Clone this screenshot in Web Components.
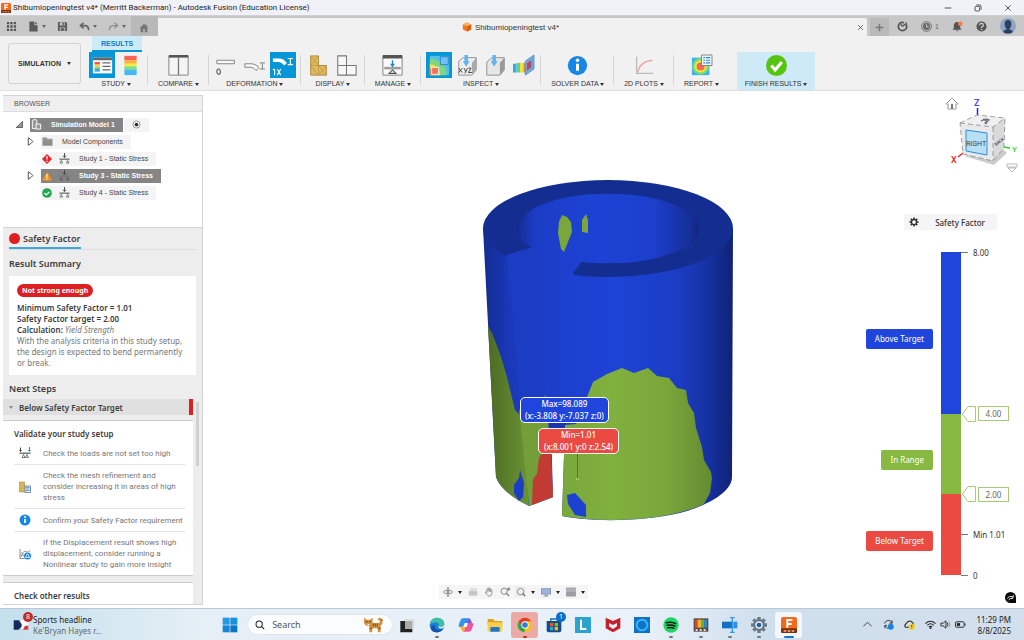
<!DOCTYPE html>
<html lang="en">
<head>
<meta charset="utf-8">
<meta name="viewport" content="width=device-width, initial-scale=1">
<title>Shibumiopeningtest v4* - Autodesk Fusion</title>
<style>
  body {
    margin: 0;
    font-family: "Noto Sans", "Open Sans", sans-serif;
    font-size: 8px;
    line-height: 11px;
    color: #3c3c3c;
    background: #fff;
    --panel-width: 199px;
    --ui-font: "Liberation Sans", Arial, sans-serif;
    --narrow-font: Roboto, "Noto Sans", sans-serif;
    --accent: #0696d7;
    --above: #1f45dc;
    --range: #87b840;
    --below: #eb4a42;
  }
</style>
</head>
<body>
<fusion-app></fusion-app>

<script>
const ICONS = {
  fusion: `<rect width="24" height="24" rx="3" fill="#f26a1b"/><rect y="17" width="24" height="7" rx="2" fill="#7c2f0c"/><path d="M8 3h9v3h-6v3h5v3h-5v4H8z" fill="#fff"/><path d="M4 21h16" stroke="#f7b58a" stroke-width="2" stroke-dasharray="4 2"/>`,
  grid: `<path d="M2 2h5v5H2zM9.500 2h5v5h-5zM17 2h5v5h-5zM2 9.500h5v5H2zM9.500 9.500h5v5h-5zM17 9.500h5v5h-5zM2 17h5v5H2zM9.500 17h5v5h-5zM17 17h5v5h-5z" fill="#555"/>`,
  file: `<path d="M3 1h11v8h7v14H3z" fill="#5a5a5a"/><path d="M16 1l5 6h-5z" fill="#5a5a5a"/>`,
  save: `<path d="M2 2h17l3 3v17H2z" fill="#5a5a5a"/><path d="M6 3h11v7H6zM6 14h12v7H6z" fill="#c8c8c8"/><path d="M12 4h3v5h-3zM8 16h8v5H8z" fill="#5a5a5a"/>`,
  undo: `<path d="M10 4L3 10l7 6M4 10h9c5 0 8 3 8 10" fill="none" stroke="#666" stroke-width="3.500"/>`,
  redo: `<path d="M14 4l7 6-7 6M20 10h-9c-5 0-8 3-8 10" fill="none" stroke="#8e8e8e" stroke-width="3"/>`,
  home: `<path d="M12 2L1 13h3v9h6v-7h4v7h6v-9h3L19 9V4h-3v2z" fill="#757575"/>`,
  cube: `<path d="M12 1l10 5v12l-10 5L2 18V6z" fill="#f47a20"/><path d="M12 1l10 5-10 5L2 6z" fill="#ffb066"/><path d="M12 11l10-5v12l-10 5z" fill="#e25d0c"/>`,
  close: `<path d="M4 4l16 16M20 4L4 20" stroke="#555" stroke-width="3" fill="none"/>`,
  minimize: `<path d="M2 12h20" stroke="#333" stroke-width="2.500"/>`,
  restore: `<rect x="3" y="7" width="14" height="14" rx="3" fill="none" stroke="#333" stroke-width="2.500"/><path d="M7 3h10q4 0 4 4v10" fill="none" stroke="#333" stroke-width="2.500"/>`,
  plus: `<path d="M12 2v20M2 12h20" stroke="#777" stroke-width="4"/>`,
  jobs: `<circle cx="12" cy="12" r="9" fill="none" stroke="#555" stroke-width="4"/><path d="M12 12l9-9M8 7l3 4" stroke="#555" stroke-width="3"/><path d="M14 1l6 2-4 4z" fill="#c8c8c8"/>`,
  clock: `<circle cx="12" cy="12" r="10.500" fill="none" stroke="#666" stroke-width="2"/><circle cx="12" cy="12" r="7.500" fill="#666"/><path d="M12 7v6h5" stroke="#ddd" stroke-width="2" fill="none"/>`,
  bell: `<path d="M11 2c-5 0-7 4-7 8v5l-3 4h20l-3-4v-5c0-4-2-8-7-8zM8 20h6l-3 3z" fill="#555"/><circle cx="18" cy="6" r="5" fill="#ff7a45"/>`,
  help: `<circle cx="12" cy="12" r="11" fill="#555"/><path d="M8 9q0-4 4-4t4 4q0 2-2.500 3.500Q12 13.500 12 15" stroke="#d0d0d0" stroke-width="2.800" fill="none"/><circle cx="12" cy="18.500" r="1.800" fill="#d0d0d0"/>`,
  avatar: `<circle cx="12" cy="12" r="12" fill="#8ea6c6"/><path d="M12 3c-4 0-5 3-5 6s1 6 3 7v1c-3 1-5 2-5 4 3 3 11 3 14 0 0-2-2-3-5-4v-1c2-1 3-4 3-7s-1-6-5-6z" fill="#2c3f5e"/>`,
  study: `<rect x="1" y="3" width="22" height="18" fill="#fff"/><path d="M1 3h22v3H1z" fill="#666"/><path d="M3 8h6v3H3z" fill="#f2554a"/><path d="M3 11h6v3H3z" fill="#f5d33d"/><path d="M3 14h6v2H3z" fill="#6bd07a"/><path d="M3 16h6v3H3z" fill="#37a6f0"/><path d="M12 9h9M12 13h9M12 17h9" stroke="#666" stroke-width="1.200"/>`,
  spectrum: `<path d="M5 1h14v5H5z" fill="#fb6155"/><path d="M5 6h14v4H5z" fill="#fdb13c"/><path d="M5 10h14v3H5z" fill="#f1ec3f"/><path d="M5 13h14v4H5z" fill="#7bdc8c"/><path d="M5 17h14v6H5z" fill="#3fbcf5"/>`,
  compare: `<path d="M1 1h22v22H1z" fill="#f5f5f5" stroke="#777"/><path d="M1 0h22v3H1z" fill="#555"/><path d="M12 3v20" stroke="#777" stroke-width="1.500"/>`,
  deform0: `<path d="M1 6h20v4H1z" fill="#f8f8f8" stroke="#777"/><ellipse cx="3" cy="19" rx="2" ry="3" fill="none" stroke="#555" stroke-width="1.200"/>`,
  deformA: `<path d="M1 10h8q4 0 8 4l-3 4q-3-4-6-4H1z" fill="#f8f8f8" stroke="#777"/><path d="M18 9h6M18 16h6M21 9v7" stroke="#777" fill="none"/>`,
  deform1: `<path d="M1 4h7q5 0 9 5l-3 3q-3-4-6-4H1z" fill="#fff"/><path d="M18 4h6M18 11h6M21 4v7M3 16v7M1 17l2-1" stroke="#fff" stroke-width="1.300" fill="none"/><path d="M6 16l4 7M10 16l-4 7" stroke="#fff" stroke-width="1.300"/>`,
  mesh: `<path d="M3 1h9v11h9v11H3z" fill="#e0b95b" stroke="#a9843a"/><path d="M3 12h9v11M3 1l9 11 9 11M12 1L3 12l9 11M21 12l-9 11" fill="none" stroke="#b8934a" stroke-width=".8"/>`,
  blocks: `<path d="M2 1h10v11h11v11H2zM2 12h10v11" fill="#f8f8f8" stroke="#777" stroke-width="1.200"/>`,
  manage: `<path d="M1 1h22v22H1z" fill="#fafafa" stroke="#777"/><path d="M1 0h22v4H1z" fill="#555"/><path d="M12 6v6M10 10l2 3 2-3" stroke="#1e88d8" stroke-width="1.500" fill="none"/><path d="M3 14h18v2H3z" fill="#aaa" stroke="#777" stroke-width=".6"/><path d="M12 17l4 4H8z" fill="none" stroke="#555" stroke-width="1.200"/>`,
  probe: `<path d="M1 1h22v22H1z" fill="#53c0e8"/><path d="M1 4q18 2 19 19H1z" fill="#7ed67e"/><path d="M1 10q11 2 12 13H1z" fill="#e9e13e"/><path d="M1 15q6 1 7 8H1z" fill="#f5803a"/><path d="M13 2h9v9h-9z" fill="#6fc0f3" stroke="#2e7cc0"/><path d="M3 14h8v8H3z" fill="#f2715f" stroke="#fff"/>`,
  xyz: `<path d="M2 7l5-4h15v14l-5 6H2z" fill="#eee" stroke="#888"/><path d="M17 9l5-6v14l-5 6z" fill="#aaa"/><path d="M8.500 0h4v7h2l-4 6-4-6h2z" fill="#5fb4ef"/><path d="M2 15l4 5M6 15l-4 5M8 15l2 4M12 15l-3 6M13 15h3l-3 5h4" stroke="#333" fill="none"/>`,
  point: `<path d="M2 8l6-5h14v14l-5 6H2z" fill="#e6e6e6" stroke="#888"/><path d="M17 9l5-6v14l-5 6z" fill="#999"/><path d="M8.500 0h4v7h2l-4 6-4-6h2z" fill="#5fb4ef"/>`,
  plane: `<path d="M0 10h4v10H0z" fill="#36a7f0"/><path d="M4 9h4v11H4z" fill="#62d38c"/><path d="M8 9h4v11H8z" fill="#f0e33f"/><path d="M12 9h3v11h-3z" fill="#f4813b"/><path d="M14 7l10-7v16l-10 7z" fill="#7aa9d8" stroke="#3a9ae0"/><path d="M16 9l5-3v8l-5 4z" fill="#b24c6e"/>`,
  info: `<circle cx="12" cy="12" r="11" fill="#1787e6"/><path d="M12 10v8" stroke="#fff" stroke-width="3.500"/><circle cx="12" cy="6" r="2" fill="#fff"/>`,
  plot: `<path d="M3 2v19h19" fill="none" stroke="#bbb" stroke-width="1.500"/><path d="M4 20Q7 7 21 6" fill="none" stroke="#eba9a2" stroke-width="1.500"/>`,
  report: `<path d="M1 3h20v20H1z" fill="#37b4ee"/><circle cx="11" cy="13" r="9.500" fill="#7ad979"/><circle cx="11" cy="13" r="7" fill="#f3e23c"/><circle cx="11" cy="13" r="4.500" fill="#ef6b52"/><path d="M12 0h12v12H12z" fill="#f4f9ff" stroke="#777"/><path d="M14 3h2M17 3h5M14 6h2M17 6h5M14 9h2M17 9h5" stroke="#2e86d8" stroke-width="1.300"/>`,
  finish: `<circle cx="12" cy="12" r="12" fill="#56c512"/><path d="M6 12l4.500 5L18 8" fill="none" stroke="#fff" stroke-width="3.500"/>`,
  expanded: `<path d="M20 4v16H3z" fill="#999" stroke="#444" stroke-width="2"/>`,
  collapsed: `<path d="M6 2q10 6 12 10Q16 16 6 22z" fill="#fff" stroke="#444" stroke-width="2.500"/>`,
  bodies: `<path d="M3 5q0-4 5-4t5 4v16H3z" fill="#999" stroke="#fff" stroke-width="2"/><path d="M11 11h10v11H11z" fill="#999" stroke="#fff" stroke-width="2"/>`,
  radio: `<circle cx="12" cy="12" r="9.500" fill="#fff" stroke="#777" stroke-width="2"/><circle cx="12" cy="12" r="5" fill="#333"/>`,
  folder: `<path d="M1 3h9l2 3h11v15H1z" fill="#8e8e8e"/><path d="M2 8h20" stroke="#bbb"/>`,
  error: `<path d="M12 0l12 12-12 12L0 12z" fill="#e8222d"/><path d="M12 5v8M12 16v3" stroke="#fff" stroke-width="3"/>`,
  warning: `<path d="M12 1l12 22H0z" fill="#f7941e"/><path d="M12 8v8M12 18v3" stroke="#fff" stroke-width="2.500"/>`,
  ok: `<circle cx="12" cy="12" r="11.500" fill="#1fa84c"/><path d="M6 12l4.500 4.500L18 9" fill="none" stroke="#fff" stroke-width="3"/>`,
  load: `<path d="M12 0v9M9 6l3 4 3-4" fill="none" stroke="#444" stroke-width="2"/><path d="M1 12h22v3H1z" fill="#777"/><path d="M5 16l3 6H2zM19 16l3 6h-6z" fill="none" stroke="#555" stroke-width="1.500"/>`,
  loads: `<path d="M3 1v7M1 6l2 3 2-3" fill="none" stroke="#444" stroke-width="2"/><path d="M21 0v8M19 6l2 3 2-3" fill="none" stroke="#1e88e0" stroke-width="2"/><path d="M1 11h22v3H1z" fill="#777"/><path d="M9 15l3 6H6zM16 15l3 6h-6z" fill="none" stroke="#555" stroke-width="1.500"/>`,
  refine: `<path d="M1 2h10v8h4v12H1z" fill="#d9b355" stroke="#9c7c36"/><path d="M12 10h11v13H12z" fill="#e8f2fc" stroke="#4d6f94" stroke-width="1.500"/><path d="M14 13h7M14 16h7M14 19h7" stroke="#3b83cc" stroke-width="1.500"/>`,
  nonlinear: `<path d="M2 2v19h9M4 18Q8 5 13 7q5 4 9-2M5 9l5 8" fill="none" stroke="#666" stroke-width="1.500"/><circle cx="17" cy="16" r="7" fill="#1787e6"/><path d="M17 11l4 8h-8z" fill="none" stroke="#fff" stroke-width="1.500"/>`,
  gear: `<path d="M12 1v22M1 12h22M4.200 4.200l15.600 15.600M19.800 4.200L4.200 19.800" stroke="#333" stroke-width="4"/><circle cx="12" cy="12" r="8" fill="#333"/><circle cx="12" cy="12" r="4.500" fill="#f5f5f5"/>`,
  orbit: `<path d="M12 1v22M9 4l3-3 3 3M9 20l3 3 3-3" fill="none" stroke="#777" stroke-width="2"/><ellipse cx="12" cy="12" rx="11" ry="4" fill="none" stroke="#777" stroke-width="2"/><circle cx="12" cy="12" r="3" fill="#999"/>`,
  look: `<path d="M2 9h20v12H2z" fill="#ccc"/><path d="M7 9V4h4v5M15 9V4h4v5M2 13h20M2 17h20" fill="none" stroke="#bbb" stroke-width="1.500"/>`,
  hand: `<path d="M7 13V5q2-2 3 0V3q2-2 3 0v1q2-2 3 1v2q3-1 3 2v6q-1 7-6 7-4 0-6-4l-4-6q2-2 4 1zM10 5v6M13 4v7M16 6v6" fill="#f4f4f4" stroke="#777" stroke-width="1.800"/>`,
  zoomFit: `<circle cx="10" cy="10" r="7.500" fill="#eef3f6" stroke="#777" stroke-width="2"/><path d="M15 15l7 7" stroke="#777" stroke-width="3"/><path d="M21 1v8M17 5h8" stroke="#555" stroke-width="2"/>`,
  zoomBox: `<path d="M1 1h20v20H1z" fill="none" stroke="#aaa" stroke-dasharray="3 2"/><circle cx="11" cy="11" r="7.500" fill="#eef3f6" stroke="#777" stroke-width="2"/><path d="M16 16l6 6" stroke="#666" stroke-width="3"/>`,
  monitor: `<path d="M0 3h24v15H0z" fill="#7d92b2"/><path d="M2 5h20v11H2z" fill="#9db4dc"/><path d="M9 18h6v3h3v2H6v-2h3z" fill="#8b8f96"/>`,
  shade: `<path d="M1 2h22v20H1z" fill="#aeb2b8" stroke="#888"/><path d="M1 12h22v10H1z" fill="#9a9ea5"/>`,
  assistant: `<path d="M12 0a12 12 0 0 1 12 12v12H12a12 12 0 0 1 0-24z" fill="#0a0a0a"/><path d="M5 14q5-6 8-4t6-2M8 17q4-4 9-3l1-6" fill="none" stroke="#fff" stroke-width="2"/>`,
  start: `<path d="M1 1h10.500v10.500H1z" fill="#2499e4"/><path d="M12.500 1H23v10.500H12.500z" fill="#1a8fdd"/><path d="M1 12.500h10.500V23H1z" fill="#1585d6"/><path d="M12.500 12.500H23V23H12.500z" fill="#0c74c8"/>`,
  search: `<circle cx="10" cy="10" r="7.500" fill="none" stroke="#222" stroke-width="2.500"/><path d="M15.500 15.500L22 22" stroke="#222" stroke-width="2.500"/>`,
  cat: `<path d="M3 1l4 3h5l4-3v8h8q3 0 3-3-1-2-3-1-1-4 3-4 4 1 4 6 0 4-3 6v10h-4l-1-6h-7l-1 6h-4v-9q-6 0-8-5z" fill="#cf9142"/><path d="M17 10v4M20 10v4M23 10v4M28 4l3 1M11 17h4M24 17h4" stroke="#7c4d1c" stroke-width="1.500"/><circle cx="7" cy="7" r="1" fill="#222"/><circle cx="12" cy="7" r="1" fill="#222"/><path d="M7 11h5l-2 2z" fill="#fff"/>`,
  taskview: `<path d="M8 3h15v14H8z" fill="#dcdcdc"/><path d="M2 6h12v12h6v5H2z" fill="#222"/><path d="M9 6h11v12H9z" fill="#aaa"/>`,
  edge: `<circle cx="12" cy="12" r="11" fill="#1b7fd4"/><path d="M1 12C2 5 7 1 12 1c7 0 11 5 11 9 0 5-6 6-9 4 2-3 0-6-3-6-5 0-9 2-10 4z" fill="#3ec1a2"/><path d="M8 12c0 7 6 9 13 6-3 5-11 7-16 3-3-3-3-8 3-9z" fill="#1253a8"/><path d="M14 14c3 2 9 1 9-4v5l-3 2c-3 1-6 0-6-3z" fill="#e8f2f8"/>`,
  copilot: `<path d="M8 2h8l3 6-4 6H9l-6 1q-3 0-2-3l3-8q1-2 4-2z" fill="#2e95ea"/><path d="M16 22H8l-3-6 4-6h6l6-1q3 0 2 3l-3 8q-1 2-4 2z" fill="#f0559b"/><path d="M9 14l-6 1 3 6q1 1 3 1l3-9z" fill="#f5b335"/><path d="M15 10l6-1-2-5q-1-2-3-2l-3 9z" fill="#8b53d8"/><path d="M10 9h5l-2 6H8z" fill="#f2f5fa"/>`,
  explorer: `<path d="M1 3h8l3 3h11v6H1z" fill="#e0a21c"/><path d="M1 8h22v14H1z" fill="#fbcf4a"/><path d="M5 22v-5q0-2 2-2h10q2 0 2 2v5z" fill="#2076c8"/>`,
  chrome: `<circle cx="12" cy="12" r="11" fill="#fbc116"/><path d="M2.500 6.500A11 11 0 0 1 21.500 6.500H12l-5 8z" fill="#e33b2e"/><path d="M2.500 6.500l4.700 8.200L12 18l-1 5A11 11 0 0 1 2.500 6.500z" fill="#2da44e"/><circle cx="12" cy="12" r="5.500" fill="#fff"/><circle cx="12" cy="12" r="4.200" fill="#2f7de1"/>`,
  store: `<path d="M7 7V3h10v4" fill="none" stroke="#1c6fb5" stroke-width="2"/><path d="M1 6h22v14q0 3-3 3H4q-3 0-3-3z" fill="#174c85"/><path d="M6 9h5v5H6z" fill="#f1542f"/><path d="M13 9h5v5h-5z" fill="#84bd22"/><path d="M6 15h5v5H6z" fill="#22a7e8"/><path d="M13 15h5v5h-5z" fill="#fbb91b"/>`,
  lapp: `<path d="M0 0h24v24H0z" fill="#2ba3cd"/><path d="M9 4v14h8" fill="none" stroke="#fff" stroke-width="3"/>`,
  mcafee: `<path d="M1 1l11 5 11-5v16l-11 6-11-6z" fill="#c4202e"/><path d="M6 9l6 3 6-3v5l-6 4-6-4z" fill="#e9eff5"/>`,
  alexa: `<path d="M0 0h24v24H0z" fill="#1171c9"/><circle cx="12" cy="12" r="8" fill="none" stroke="#30b8f2" stroke-width="3"/>`,
  spotify: `<circle cx="12" cy="12" r="11.500" fill="#1ed760"/><path d="M5 8.500q8-2 14 1.500M6 12.500q7-1.500 12 1.300M7 16q6-1 9.500 1" fill="none" stroke="#111" stroke-width="2.200" stroke-linecap="round"/>`,
  swatches: `<path d="M1 2h22v20H1z" fill="#5d4a3c"/><path d="M3 4h4v12H3z" fill="#e8423a"/><path d="M7 4h5v12H7z" fill="#f4b12c"/><path d="M12 4h5v12h-5z" fill="#58b947"/><path d="M17 4h4v12h-4z" fill="#2e86d8"/><path d="M4 18h3v3H4zM10 18h3v3h-3zM16 18h3v3h-3z" fill="#ddd"/>`,
  rename: `<path d="M0 7h16v10H0z" fill="#1570c4"/><path d="M17 7h6v10h-6z" fill="#2e8ee0"/><path d="M12 1h7M12 23h7M15.500 1v22" stroke="#2e9ae8" stroke-width="2"/>`,
  settings: `<path d="M12 0v24M0 12h24M3.500 3.500l17 17M20.500 3.500l-17 17" stroke="#6b7888" stroke-width="5"/><circle cx="12" cy="12" r="9" fill="#6b7888"/><circle cx="12" cy="12" r="5.500" fill="#e8eff6"/><circle cx="12" cy="12" r="3.500" fill="#1a5fa8"/>`,
  chevron: `<path d="M3 16l9-9 9 9" fill="none" stroke="#333" stroke-width="2"/>`,
  sync: `<path d="M3 10q3-8 10-7 5 1 7 6M20 3v6h-6M4 20v-6h5M4 15q3 5 8 6" fill="none" stroke="#333" stroke-width="2"/><circle cx="17" cy="17" r="6.500" fill="#1883dc"/>`,
  cloud: `<path d="M3 18q-3-5 2-8 3-7 10-5 6 3 6 8l-4 5z" fill="none" stroke="#333" stroke-width="2.500"/><circle cx="17" cy="17" r="6.500" fill="#fcd116"/><path d="M17 13v5M17 20v1" stroke="#333" stroke-width="2"/>`,
  wifi: `<path d="M1 10q11-10 22 0M5 14q7-7 14 0M8.500 17.500q3.500-3 7 0" fill="none" stroke="#222" stroke-width="2.300"/><circle cx="12" cy="20" r="2" fill="#222"/>`,
  speaker: `<path d="M2 9h5l6-5v16l-6-5H2z" fill="none" stroke="#222" stroke-width="2"/><path d="M16 8q3 4 0 8" fill="none" stroke="#222" stroke-width="2"/><path d="M19 5q6 7 0 14" fill="none" stroke="#999" stroke-width="2"/>`,
  battery: `<rect x="1" y="6" width="19" height="12" rx="3" fill="none" stroke="#222" stroke-width="2"/><path d="M4 9h7v6H4z" fill="#222"/><path d="M22 10v4" stroke="#222" stroke-width="2"/>`,
  sports: `<path d="M1 5h11l3 14H1z" fill="#142a5c"/><path d="M9 5h14v14H8q6-3 5-8z" fill="#f8f8fa"/><path d="M18 13h5v6h-8z" fill="#d13a45"/>`
};

const BASE = `
  *, *::before { box-sizing: border-box; }
  button, input {
    font: inherit; color: inherit; margin: 0; padding: 0;
    border: 0; background: none; border-radius: 0; outline-offset: -1px;
  }
  button { cursor: pointer; }
  h2, h3, p, ul { margin: 0; padding: 0; font-size: inherit; list-style: none; }
`;

class BaseElement extends HTMLElement {
  connectedCallback() {
    if (this.shadowRoot) return;
    this.attachShadow({ mode: 'open' });
    this.shadowRoot.innerHTML = `<style>${BASE}${this.styles()}</style>${this.render()}`;
  }

  styles() { return ':host { display: block; }'; }

  render() { return '<slot></slot>'; }
}

class UiIcon extends BaseElement {
  styles() {
    return `
      :host { display: inline-block; flex: none; width: var(--size, 10px); height: var(--size, 10px); }
      :host([wide]) { width: calc(var(--size, 10px) * 4 / 3); }
      svg { display: block; width: 100%; height: 100%; overflow: visible; }
    `;
  }

  render() {
    const box = this.hasAttribute('wide') ? '0 0 32 24' : '0 0 24 24';
    return `<svg viewBox="${box}" aria-hidden="true">${ICONS[this.getAttribute('name')]}</svg>`;
  }
}
customElements.define('ui-icon', UiIcon);

// small triangle used by every drop-down
class DropCaret extends BaseElement {
  styles() {
    return `
      :host {
        display: inline-block; flex: none; vertical-align: middle;
        border: 2px solid transparent; border-top: 3px solid currentColor; border-bottom: 0;
      }
    `;
  }
}
customElements.define('drop-caret', DropCaret);

class TitleBar extends BaseElement {
  styles() {
    return `
      :host {
        display: flex; align-items: center; gap: 2px; height: 16px; padding: 0 12px 0 1px;
        box-sizing: border-box;
        background: #f0f2f8; border-bottom: 1px solid #d0d0d2; color: #222;
        font-family: var(--narrow-font);
      }
      .buttons { display: flex; gap: 22px; margin-left: auto; --size: 8px; }
      button { display: flex; }
    `;
  }

  render() {
    return `
      <ui-icon name="fusion"></ui-icon>
      <span><slot></slot></span>
      <div class="buttons">
        <button aria-label="Minimize"><ui-icon name="minimize"></ui-icon></button>
        <button aria-label="Restore"><ui-icon name="restore"></ui-icon></button>
        <button aria-label="Close"><ui-icon name="close"></ui-icon></button>
      </div>
    `;
  }
}
customElements.define('title-bar', TitleBar);

class TabStrip extends BaseElement {
  styles() {
    return `
      :host {
        display: flex; height: 20px; background: #c8c8c8; color: #333;
        font-family: var(--ui-font); font-size: 7px;
      }
      button { display: flex; align-items: center; gap: 3px; color: #666; }
      .quick { display: flex; align-items: center; gap: 11px; padding: 0 5px 0 6px; --size: 11px; }
      .home { padding: 4px 9px 0 8px; background: #b9b9b9; }
      .doc {
        flex: 1; display: flex; align-items: center; margin-top: 2px; padding: 0 3px 0 6px;
        background: #f1f1f1; border-radius: 0 2px 0 0;
      }
      .doc h2 { flex: 1; display: flex; justify-content: center; align-items: center; gap: 3px; font-weight: normal; font-size: 8px; }
      .doc button { --size: 7px; }
      .add { padding: 0 5px; margin: 2px 0 0 3px; background: #bababa; --size: 9px; }
      .tools { display: flex; align-items: center; gap: 13px; padding: 0 8px; --size: 11px; }
      .avatar { --size: 16px; }
    `;
  }

  render() {
    return `
      <div class="quick">
        <button aria-label="Data panel"><ui-icon name="grid"></ui-icon></button>
        <button aria-label="File"><ui-icon name="file"></ui-icon><drop-caret></drop-caret></button>
        <button aria-label="Save"><ui-icon name="save"></ui-icon></button>
        <button aria-label="Undo"><ui-icon name="undo"></ui-icon><drop-caret></drop-caret></button>
        <button aria-label="Redo"><ui-icon name="redo"></ui-icon><drop-caret></drop-caret></button>
      </div>
      <button class="home" aria-label="Home"><ui-icon name="home"></ui-icon></button>
      <div class="doc">
        <h2><ui-icon name="cube"></ui-icon>Shibumiopeningtest v4*</h2>
        <button aria-label="Close tab"><ui-icon name="close"></ui-icon></button>
      </div>
      <button class="add" aria-label="New design"><ui-icon name="plus"></ui-icon></button>
      <div class="tools">
        <button aria-label="Extensions"><ui-icon name="jobs"></ui-icon></button>
        <button aria-label="Job status"><ui-icon name="clock"></ui-icon>1</button>
        <button aria-label="Notifications"><ui-icon name="bell"></ui-icon></button>
        <button aria-label="Help"><ui-icon name="help"></ui-icon></button>
        <button class="avatar" aria-label="Account"><ui-icon name="avatar"></ui-icon></button>
      </div>
    `;
  }
}
customElements.define('tab-strip', TabStrip);

class RibbonGroup extends BaseElement {
  styles() {
    return `
      :host {
        display: flex; flex-direction: column; align-items: center; justify-content: space-between;
        padding: 0 5px 1px; position: relative;
      }
      :host::after {
        content: ""; position: absolute; right: 0; top: 3px; bottom: 5px;
        border-right: 1px solid #d6d6d6;
      }
      :host([last])::after { display: none; }
      :host([finish]) { background: #cdeaf6; margin-left: 8px; }
      .tools { display: flex; gap: 2px; }
      .label { white-space: nowrap; padding: 0 5px; }
      :host([finish]) .label { padding: 0 3px; }
    `;
  }

  render() {
    const label = this.getAttribute('label');
    const last = this.hasAttribute('finish') || this.hasAttribute('last');
    if (last) this.setAttribute('last', '');
    return `
      <div class="tools"><slot></slot></div>
      <button class="label">${label} <drop-caret></drop-caret></button>
    `;
  }
}
customElements.define('ribbon-group', RibbonGroup);

class ToolButton extends BaseElement {
  styles() {
    return `
      :host { display: block; }
      button { display: flex; align-items: center; justify-content: center; width: 26px; height: 26px; --size: 21px; }
      :host([active]) button { background: var(--accent); }
    `;
  }

  render() {
    const icon = this.getAttribute('icon');
    return `<button aria-label="${icon}"><ui-icon name="${icon}"></ui-icon></button>`;
  }
}
customElements.define('tool-button', ToolButton);

class RibbonBar extends BaseElement {
  styles() {
    return `
      :host {
        display: flex; padding-left: 8px; gap: 3px; background: #f1f1f1;
        border-bottom: 1px solid #dedede;
        font-family: var(--ui-font); font-size: 7px; line-height: 11px; color: #333;
      }
      .workspace {
        align-self: center; display: flex; align-items: center; justify-content: center; gap: 6px;
        width: 73px; height: 41px; border: 1px solid #d2d2d2; border-radius: 3px; font-weight: bold;
      }
      .results {
        display: block; width: 50px; height: 16px; margin-left: 8px; background: #cdeaf6;
        border-bottom: 2px solid var(--accent); color: #0a7fbd; font-weight: bold;
      }
      .groups { display: flex; }
    `;
  }

  render() {
    return `
      <button class="workspace">SIMULATION <drop-caret></drop-caret></button>
      <div>
        <button class="results">RESULTS</button>
        <div class="groups">
          <ribbon-group label="STUDY"><tool-button icon="study" active></tool-button><tool-button icon="spectrum"></tool-button></ribbon-group>
          <ribbon-group label="COMPARE"><tool-button icon="compare"></tool-button></ribbon-group>
          <ribbon-group label="DEFORMATION"><tool-button icon="deform0"></tool-button><tool-button icon="deformA"></tool-button><tool-button icon="deform1" active></tool-button></ribbon-group>
          <ribbon-group label="DISPLAY"><tool-button icon="mesh"></tool-button><tool-button icon="blocks"></tool-button></ribbon-group>
          <ribbon-group label="MANAGE"><tool-button icon="manage"></tool-button></ribbon-group>
          <ribbon-group label="INSPECT"><tool-button icon="probe" active></tool-button><tool-button icon="xyz"></tool-button><tool-button icon="point"></tool-button><tool-button icon="plane"></tool-button></ribbon-group>
          <ribbon-group label="SOLVER DATA"><tool-button icon="info"></tool-button></ribbon-group>
          <ribbon-group label="2D PLOTS"><tool-button icon="plot"></tool-button></ribbon-group>
          <ribbon-group label="REPORT" last><tool-button icon="report"></tool-button></ribbon-group>
          <ribbon-group label="FINISH RESULTS" finish><tool-button icon="finish"></tool-button></ribbon-group>
        </div>
      </div>
    `;
  }
}
customElements.define('ribbon-bar', RibbonBar);

class TreeRow extends BaseElement {
  styles() {
    return `
      :host { display: flex; align-items: center; height: 17px; padding-left: 12px; --size: 9px; }
      :host([level="1"]) { padding-left: 23px; }
      .twist { display: flex; width: 9px; margin-right: 6px; }
      .label {
        display: flex; align-items: center; gap: 7px; height: 14px; padding: 0 8px 0 1px;
        background: #f4f4f4; color: #444;
      }
      :host([selected]) .label { background: #858585; color: #fff; font-weight: bold; }
      .icons { display: flex; align-items: center; gap: 7px; }
      .text { padding-left: 2px; }
      .radio { display: flex; padding: 0 8px; height: 14px; align-items: center; background: #f4f4f4; margin-left: 1px; }
    `;
  }

  render() {
    const twist = this.getAttribute('twist');
    const icons = this.getAttribute('icons').split(' ');
    return `
      <span class="twist">${twist ? `<ui-icon name="${twist}"></ui-icon>` : ''}</span>
      <span class="label">
        <span class="icons">${icons.map((name) => `<ui-icon name="${name}" style="--size: ${name === 'load' || name === 'folder' || name === 'bodies' ? 11 : 10}px"></ui-icon>`).join('')}</span>
        <span class="text"><slot></slot></span>
      </span>
      ${this.hasAttribute('radio') ? '<span class="radio"><ui-icon name="radio"></ui-icon></span>' : ''}
    `;
  }
}
customElements.define('tree-row', TreeRow);

class BrowserTree extends BaseElement {
  styles() {
    return `
      :host {
        display: block; font-family: var(--ui-font); font-size: 7px; background: #fff;
      }
      h2 {
        padding: 2px 11px; font-weight: normal; font-size: 7px; color: #555;
        background: #efefef; border-bottom: 1px solid #dcdcdc;
      }
      .rows { padding: 4px 0 26px; border-bottom: 1px solid #d4d4d4; }
    `;
  }

  render() {
    return `
      <h2>BROWSER</h2>
      <div class="rows">
        <tree-row twist="expanded" icons="bodies" selected radio>Simulation Model 1</tree-row>
        <tree-row level="1" twist="collapsed" icons="folder">Model Components</tree-row>
        <tree-row level="1" icons="error load">Study 1 - Static Stress</tree-row>
        <tree-row level="1" twist="collapsed" icons="warning load" selected>Study 3 - Static Stress</tree-row>
        <tree-row level="1" icons="ok load">Study 4 - Static Stress</tree-row>
      </div>
    `;
  }
}
customElements.define('browser-tree', BrowserTree);

class NextStep extends BaseElement {
  styles() {
    return `
      :host {
        display: flex; align-items: center; gap: 12px; padding: 5px 0; --size: 12px; color: #777;
        font-family: var(--narrow-font);
      }
      ui-icon { margin-left: 5px; }
    `;
  }

  render() {
    return `<ui-icon name="${this.getAttribute('icon')}"></ui-icon><span><slot></slot></span>`;
  }
}
customElements.define('next-step', NextStep);

class ResultPanel extends BaseElement {
  styles() {
    return `
      :host { display: flex; flex-direction: column; flex: 1; background: #ededed; }
      h2, h3 { font-weight: 600; color: #3c3c3c; }
      h2 { font-size: 9px; padding-left: 6px; }
      .tab { margin: 0 6px; border-bottom: 1px solid #ddd; display: flex; }
      .tab span {
        display: flex; align-items: center; gap: 3px; height: 21px; font-size: 9px; font-weight: 600;
        border-bottom: 2px solid #41a6dc; padding: 2px 1px 0 0;
      }
      .tab i { width: 11px; height: 11px; border-radius: 50%; background: #de1f1f; }
      .tab + h2 { margin: 8px 0 7px; }
      .card { margin: 0 6px 8px; padding: 8px 8px 7px; background: #fff; }
      .pill {
        display: inline-block; padding: 1px 5px; margin-bottom: 5px; border-radius: 7px;
        background: #de1f1f; color: #fff; font-weight: 700; font-size: 7px;
      }
      .card b { font-weight: 600; }
      .card p { color: #777; }
      .card p b { color: #3c3c3c; }
      .steps { flex: 1; display: flex; gap: 3px; margin-top: 5px; }
      .list { flex: 1; min-width: 0; display: flex; flex-direction: column; }
      .fold {
        display: flex; align-items: center; gap: 6px; height: 16px; padding-left: 6px; text-align: left;
        background: #e0e0e0; border-right: 4px solid #e01f1f; font-weight: 600; color: #3c3c3c;
      }
      .fold drop-caret { color: #888; }
      .group {
        padding: 7px 11px 0; margin-top: 5px; background: #fff; border: 1px solid #ccc; border-width: 1px 0;
      }
      .group h3 { margin-bottom: 3px; }
      .group next-step { margin-right: -3px; }
      .group next-step + next-step { border-top: 1px solid #e4e4e4; }
      .group + .group { flex: 1; margin-top: 6px; border-bottom: 0; }
      .group + .group h3 { margin: 0; }
      .scroll { width: 3px; height: 64px; margin: 3px 3px 0 0; border-radius: 1px; background: #d0d0d0; }
    `;
  }

  render() {
    return `
      <div class="tab"><span><i></i>Safety Factor</span></div>
      <h2>Result Summary</h2>
      <div class="card">
        <div class="pill">Not strong enough</div>
        <p><b>Minimum Safety Factor = 1.01</b></p>
        <p><b>Safety Factor target = 2.00</b></p>
        <p><b>Calculation:</b> <em>Yield Strength</em></p>
        <p>With the analysis criteria in this study setup, the design is expected to bend permanently or break.</p>
      </div>
      <h2>Next Steps</h2>
      <div class="steps">
        <div class="list">
          <button class="fold"><drop-caret></drop-caret>Below Safety Factor Target</button>
          <div class="group">
            <h3>Validate your study setup</h3>
            <next-step icon="loads">Check the loads are not set too high</next-step>
            <next-step icon="refine">Check the mesh refinement and consider increasing it in areas of high stress</next-step>
            <next-step icon="info">Confirm your Safety Factor requirement</next-step>
            <next-step icon="nonlinear">If the Displacement result shows high displacement, consider running a Nonlinear study to gain more insight</next-step>
          </div>
          <div class="group"><h3>Check other results</h3></div>
        </div>
        <div class="scroll"></div>
      </div>
    `;
  }
}
customElements.define('result-panel', ResultPanel);

class ModelCallout extends BaseElement {
  styles() {
    return `
      :host {
        display: block; box-sizing: border-box; padding: 0 4px; line-height: 12px; text-align: center; white-space: nowrap;
        color: #fff; font-weight: 500; background: var(--above); border: 1px solid #fff; border-radius: 5px;
      }
      :host([kind="min"]) { background: var(--below); padding: 0 5px; }
    `;
  }
}
customElements.define('model-callout', ModelCallout);

class ResultModel extends BaseElement {
  styles() {
    return `
      :host { display: block; position: relative; }
      svg { display: block; }
      model-callout { position: absolute; left: 49px; top: 222px; }
      model-callout[kind="min"] { left: 67px; top: 253px; }
    `;
  }

  render() {
    return `
      <svg width="280" height="350" viewBox="471 175 280 350" role="img" aria-label="Safety factor result">
        <defs>
          <linearGradient id="body" gradientUnits="userSpaceOnUse" x1="483" x2="733" y1="0" y2="0">
            <stop offset="0" stop-color="#142b90"/><stop offset=".1" stop-color="#1a38b8"/>
            <stop offset=".3" stop-color="#1c3fcd"/><stop offset=".55" stop-color="#1d43d6"/>
            <stop offset=".78" stop-color="#1b3dc4"/><stop offset=".92" stop-color="#152f9b"/>
            <stop offset="1" stop-color="#0f2274"/>
          </linearGradient>
          <linearGradient id="bore" gradientUnits="userSpaceOnUse" x1="517" x2="699" y1="0" y2="0">
            <stop offset="0" stop-color="#142c91"/><stop offset=".09" stop-color="#1b3bc2"/>
            <stop offset=".24" stop-color="#1c3fcd"/><stop offset=".45" stop-color="#1d42d4"/>
            <stop offset=".75" stop-color="#1c3fcc"/>
            <stop offset=".95" stop-color="#162f9a"/><stop offset="1" stop-color="#10257e"/>
          </linearGradient>
          <linearGradient id="pass" gradientUnits="userSpaceOnUse" x1="562" x2="712" y1="0" y2="0">
            <stop offset="0" stop-color="#7aa83b"/><stop offset=".35" stop-color="#80b03e"/>
            <stop offset=".7" stop-color="#7aa63b"/><stop offset="1" stop-color="#648a30"/>
          </linearGradient>
          <linearGradient id="passLeft" gradientUnits="userSpaceOnUse" x1="488" x2="529" y1="0" y2="0">
            <stop offset="0" stop-color="#4d6b25"/><stop offset="1" stop-color="#6b9434"/>
          </linearGradient>
        </defs>
        <path d="M483 228L496 477C501 490 515 499 529 506L553 497 551 425 565 425 562 516C590 522 640 522 680 513 710 505 732 491 732 477L733 228z" fill="url(#body)"/>
        <ellipse cx="608" cy="228.500" rx="125" ry="48.500" fill="#142d90"/>
        <ellipse cx="608" cy="228.500" rx="91" ry="34.800" fill="url(#bore)"/>
        <path d="M507 255L533 247Q553 257 583 260L573 273L577 279Q530 278 505 258z" fill="url(#body)"/>
        <path d="M488 326L492 333 499 351 502 360 507 377 515 410 523 418 529 506C515 499 501 490 496 477z" fill="url(#passLeft)"/>
        <path d="M507 255L533 247 553 497 529 506z" fill="#1c3dc3"/>
        <path d="M519 409L524 418 548 418 553 497 529 506z" fill="#739e38"/>
        <path d="M549 420h17v10h-17z" fill="#1934ae"/>
        <path d="M545 395l2 6-4 1z" fill="#7fae3e"/>
        <path d="M539 458L543 452 551 452 553 497 532 505 533 479 537 474z" fill="#c13a34"/>
        <path d="M520 470L524 483 523 497 519 501 514 493 514 485 519 478z" fill="#1c3dc3"/>
        <path d="M565 425L576 424 582 410 587 397 593 382 607 374 622 368 634 373 648 368 657 376 669 378 677 388 686 390 688 403 694 413 696 428 702 447 704 460 711 472 712 478 710 493 704 504C670 520 610 524 562 516z" fill="url(#pass)"/>
        <path d="M567 495L575 493 586 505 586 517 575 515 568 504z" fill="#1d42d2"/>
        <path d="M562 215L567 217 571 222 572 232 564 252 561 249 558 233 559 222z" fill="#7aa63b"/>
        <path d="M586 214L588 220 588 233 582 232 582 220z" fill="#7aa63b"/>
        <path d="M577.500 454v24" stroke="#55752a"/><path d="M576 479h3" stroke="#b9d890"/>
      </svg>
      <model-callout>Max=98.089<br>(x:-3.808 y:-7.037 z:0)</model-callout>
      <model-callout kind="min">Min=1.01<br>(x:8.001 y:0 z:2.54)</model-callout>
    `;
  }
}
customElements.define('result-model', ResultModel);

class ViewCube extends BaseElement {
  styles() {
    return `
      svg { display: block; }
      text { font-family: Roboto, sans-serif; }
      :host { display: block; }
    `;
  }

  render() {
    return `
      <svg width="74" height="78" viewBox="945 97 74 78" role="img" aria-label="View cube">
        <path d="M946 104l6-6 6 6h-2v5h-8v-5z" fill="#fff" stroke="#999"/><path d="M951 104h2v5h-2z" fill="#777"/>
        <path d="M964 156l30 9 13-12-4-4-30 5z" fill="#999" opacity=".5"/>
        <path d="M977.500 108v8" stroke="#2222f0" stroke-width="1.500"/>
        <path d="M963 153l-5 4" stroke="#e22" stroke-width="1.500"/>
        <path d="M1003 147l7 1" stroke="#1fdf1f" stroke-width="1.500"/>
        <path d="M960 123l17-8 28 3-12 9z" fill="#f0f0f0"/>
        <path d="M960 123l33 4v34l-30-7z" fill="#e9e9e9"/>
        <path d="M993 127l12-9-1 30-11 13z" fill="#dadada"/>
        <path d="M960 123l17-8 28 3-1 30-11 13-30-7zM960 123l33 4 12-9M993 127v34" fill="none" stroke="#888" stroke-width=".8" stroke-dasharray="5 3"/>
        <path d="M966 130l21 3v22l-21-4z" fill="#b9dff7" stroke="#2a8fd8"/>
        <text x="966" y="146" font-size="7" fill="#2d4458">RIGHT</text>
        <path d="M981 121l5-2 3 1-4 3 2 1M983 119l5 3" fill="none" stroke="#667" stroke-width="1.200"/>
        <text transform="translate(996 146) rotate(-38)" font-size="4" font-weight="700" fill="#445">BACK</text>
        <text x="974" y="106" font-size="9" font-weight="700" fill="#4a4af5">Z</text>
        <text x="951" y="163" font-size="9" font-weight="500" fill="#e22">X</text>
        <text x="1012" y="152" font-size="8" font-weight="500" fill="#1fcf1f">Y</text>
        <path d="M1007 164h10v3h-10zM1008 168h8l-4 4z" fill="#fff" stroke="#aaa" stroke-width=".8"/>
      </svg>
    `;
  }
}
customElements.define('view-cube', ViewCube);

class FactorLegend extends BaseElement {
  styles() {
    return `
      :host { display: flex; flex-direction: column; color: #333; }
      .head {
        align-self: flex-end; display: flex; align-items: center; gap: 16px; height: 16px;
        padding: 0 12px 0 5px; margin: 0 22px 22px 0; background: #f5f5f5; font-weight: 500;
      }
      .head button { display: flex; }
      .scale {
        flex: 1; display: grid; grid-template-columns: auto 20px 58px;
        grid-template-rows: 0px 400fr 200fr 99fr 101fr;
      }
      .tag {
        grid-column: 1; align-self: center; justify-self: end; margin: 12px 8px 0 0; padding: 4px 9px 5px;
        border-radius: 2px; color: #fff; white-space: nowrap;
      }
      .bar { grid-column: 2; }
      .above { grid-row: 2; background: var(--above); }
      .range { grid-row: 3; background: var(--range); }
      .below { grid-row: 4 / 6; background: var(--below); }
      .tick { grid-column: 3; align-self: end; display: flex; align-items: center; gap: 5px; height: 0; white-space: nowrap; }
      .tick::before { content: ""; width: 7px; height: 1px; background: #777; }
      .limit { gap: 2px; padding-left: 1px; }
      .limit::before { display: none; }
      .limit svg { flex: none; width: 14px; height: 16px; }
      .limit input { width: 31px; height: 15px; border: 1px solid #a5cc74; text-align: center; color: #666; }
    `;
  }

  limit(row, value) {
    return `
      <label class="tick limit" style="grid-row: ${row}">
        <svg viewBox="0 0 14 16" aria-hidden="true"><path d="M.5 8L6 .5h7.500v15H6z" fill="#fff" stroke="#a5cc74"/></svg>
        <input value="${value}" aria-label="Limit">
      </label>
    `;
  }

  render() {
    return `
      <div class="head">
        <button aria-label="Legend options"><ui-icon name="gear"></ui-icon></button>
        <span>Safety Factor</span>
      </div>
      <div class="scale">
        <div class="bar above"></div>
        <div class="bar range"></div>
        <div class="bar below"></div>
        <div class="tag above">Above Target</div>
        <div class="tag range">In Range</div>
        <div class="tag below">Below Target</div>
        <div class="tick" style="grid-row: 1">8.00</div>
        ${this.limit(2, '4.00')}
        ${this.limit(3, '2.00')}
        <div class="tick" style="grid-row: 4">Min 1.01</div>
        <div class="tick" style="grid-row: 5">0</div>
      </div>
    `;
  }
}
customElements.define('factor-legend', FactorLegend);

class NavBar extends BaseElement {
  styles() {
    return `
      :host { display: flex; align-items: center; gap: 6px; padding: 2px 3px 2px 4px; background: #f5f5f5; --size: 10px; }
      button { display: flex; align-items: center; gap: 5px; color: #222; }
    `;
  }

  render() {
    const tools = [
      ['orbit', 'Orbit', true], ['look', 'Look at', false], ['hand', 'Pan', false], ['zoomFit', 'Zoom', false],
      ['zoomBox', 'Fit', true], ['monitor', 'Display settings', true], ['shade', 'Grid and snaps', true]
    ];
    return tools.map(([icon, label, menu]) => `
      <button aria-label="${label}"><ui-icon name="${icon}"></ui-icon>${menu ? '<drop-caret></drop-caret>' : ''}</button>
    `).join('');
  }
}
customElements.define('nav-bar', NavBar);

class ModelViewport extends BaseElement {
  styles() {
    return `
      :host {
        flex: 1; display: grid; min-width: 0; padding-right: 5px; background: #fff;
        grid-template-columns: minmax(0, 1fr) auto minmax(0, 1fr);
        grid-template-rows: 1fr auto;
      }
      result-model { grid-area: 1 / 2; align-self: center; margin-top: 24px; }
      nav-bar { grid-area: 2 / 1 / 3 / 4; justify-self: center; margin: 0 calc(var(--panel-width) - 4px) 9px 0; }
      .right { grid-area: 1 / 3 / 3 / 4; display: flex; flex-direction: column; align-items: flex-end; padding: 6px 0 5px; }
      factor-legend { flex: 1; margin: 39px 0 17px; }
      .right button { display: flex; margin-right: 3px; --size: 11px; }
    `;
  }

  render() {
    return `
      <result-model></result-model>
      <div class="right">
        <view-cube></view-cube>
        <factor-legend></factor-legend>
        <button aria-label="Assistant"><ui-icon name="assistant"></ui-icon></button>
      </div>
      <nav-bar></nav-bar>
    `;
  }
}
customElements.define('model-viewport', ModelViewport);

class TaskBar extends BaseElement {
  styles() {
    return `
      :host {
        display: grid; grid-template-columns: 1fr 57% 1fr; align-items: center; height: 32px;
        box-sizing: border-box;
        border-top: 1px solid #b9c8d6; color: #222;
        background: linear-gradient(90deg, #c3e0ec, #e6eff6 20%, #eaf1f8 62%, #cfdfed 75%, #d3dfec);
      }
      .news { display: flex; align-items: center; gap: 4px; padding-left: 13px; text-align: left; --size: 16px; }
      .news small { display: block; font-size: inherit; color: #666; }
      .pic, .badged { position: relative; display: flex; }
      .badge {
        position: absolute; top: -5px; right: -4px; width: 10px; height: 10px; border-radius: 50%;
        background: #c42b1c; color: #fff; font-size: 7px; line-height: 10px; text-align: center;
      }
      .main { display: flex; align-items: center; }
      .start { display: flex; margin: 0 9px 0 2px; --size: 16px; }
      .search {
        display: flex; align-items: center; gap: 7px; width: 146px; height: 21px; padding: 0 9px 0 7px;
        border: 1px solid #dde5ee; border-radius: 11px; background: #fbfcfe;
      }
      .search input { flex: 1; min-width: 0; font-size: 9px; }
      .search input::placeholder { color: #555; opacity: 1; }
      .search [name="cat"] { --size: 16px; }
      .apps { flex: 1; display: flex; --size: 16px; }
      .apps button {
        flex: 1; display: flex; flex-direction: column; align-items: center; justify-content: center; height: 26px;
        margin: 0 2px 0 1px; border-radius: 3px; position: relative;
      }
      .apps .open::after {
        content: ""; position: absolute; bottom: 0; width: 4px; height: 2px; border-radius: 1px; background: #777;
      }
      .apps .alert { background: #ebaaa6; }
      .apps .alert::after { background: #c42b1c; }
      .apps .current { background: #f3f7fb; }
      .apps .current::after { width: 10px; background: #1578d4; }
      .store { background: #0a6fc8; }
      .tray { display: flex; align-items: center; justify-content: flex-end; gap: 10px; padding-right: 13px; --size: 11px; }
      .tray button { display: flex; gap: 4px; }
      .tray .clock { display: block; text-align: right; }
    `;
  }

  render() {
    const apps = [
      ['taskview', ''], ['edge', 'open'], ['copilot', ''], ['explorer', ''], ['chrome', 'open alert'],
      ['store', ''], ['lapp', ''], ['mcafee', ''], ['alexa', ''], ['spotify', 'open'],
      ['swatches', 'open'], ['rename', 'open'], ['settings', 'open'], ['fusion', 'open current']
    ];
    return `
      <button class="news">
        <span class="pic"><ui-icon name="sports"></ui-icon><span class="badge">8</span></span>
        <span>Sports headline<small>Ke'Bryan Hayes r...</small></span>
      </button>
      <div class="main">
        <button class="start" aria-label="Start"><ui-icon name="start"></ui-icon></button>
        <label class="search">
          <ui-icon name="search"></ui-icon>
          <input type="text" placeholder="Search" aria-label="Search">
          <ui-icon name="cat" wide></ui-icon>
        </label>
        <div class="apps">
          ${apps.map(([name, state]) => `
            <button class="${state}" aria-label="${name}">
              <span class="badged"><ui-icon name="${name}"></ui-icon>${name === 'store' ? '<span class="badge store">1</span>' : ''}</span>
            </button>
          `).join('')}
        </div>
      </div>
      <div class="tray">
        <button aria-label="Hidden icons"><ui-icon name="chevron"></ui-icon></button>
        <button aria-label="Sync"><ui-icon name="sync"></ui-icon></button>
        <button aria-label="Cloud storage"><ui-icon name="cloud"></ui-icon></button>
        <button aria-label="Network, sound and power"><ui-icon name="wifi"></ui-icon><ui-icon name="speaker"></ui-icon><ui-icon name="battery"></ui-icon></button>
        <button class="clock">11:29 PM<br>8/8/2025</button>
      </div>
    `;
  }
}
customElements.define('task-bar', TaskBar);

class FusionApp extends BaseElement {
  styles() {
    return `
      :host { display: flex; flex-direction: column; min-height: 100vh; }
      .work { flex: 1; display: flex; }
      aside {
        display: flex; flex-direction: column; flex: none; width: calc(var(--panel-width) + 1px);
        margin: 4px 0 3px 3px; border: 1px solid #d4d4d4; border-left: 0;
      }
    `;
  }

  render() {
    return `
      <title-bar>Shibumiopeningtest v4* (Merritt Backerman) - Autodesk Fusion (Education License)</title-bar>
      <tab-strip></tab-strip>
      <ribbon-bar></ribbon-bar>
      <div class="work">
        <aside>
          <browser-tree></browser-tree>
          <result-panel></result-panel>
        </aside>
        <model-viewport></model-viewport>
      </div>
      <task-bar></task-bar>
    `;
  }
}
customElements.define('fusion-app', FusionApp);
</script>
</body>
</html>
